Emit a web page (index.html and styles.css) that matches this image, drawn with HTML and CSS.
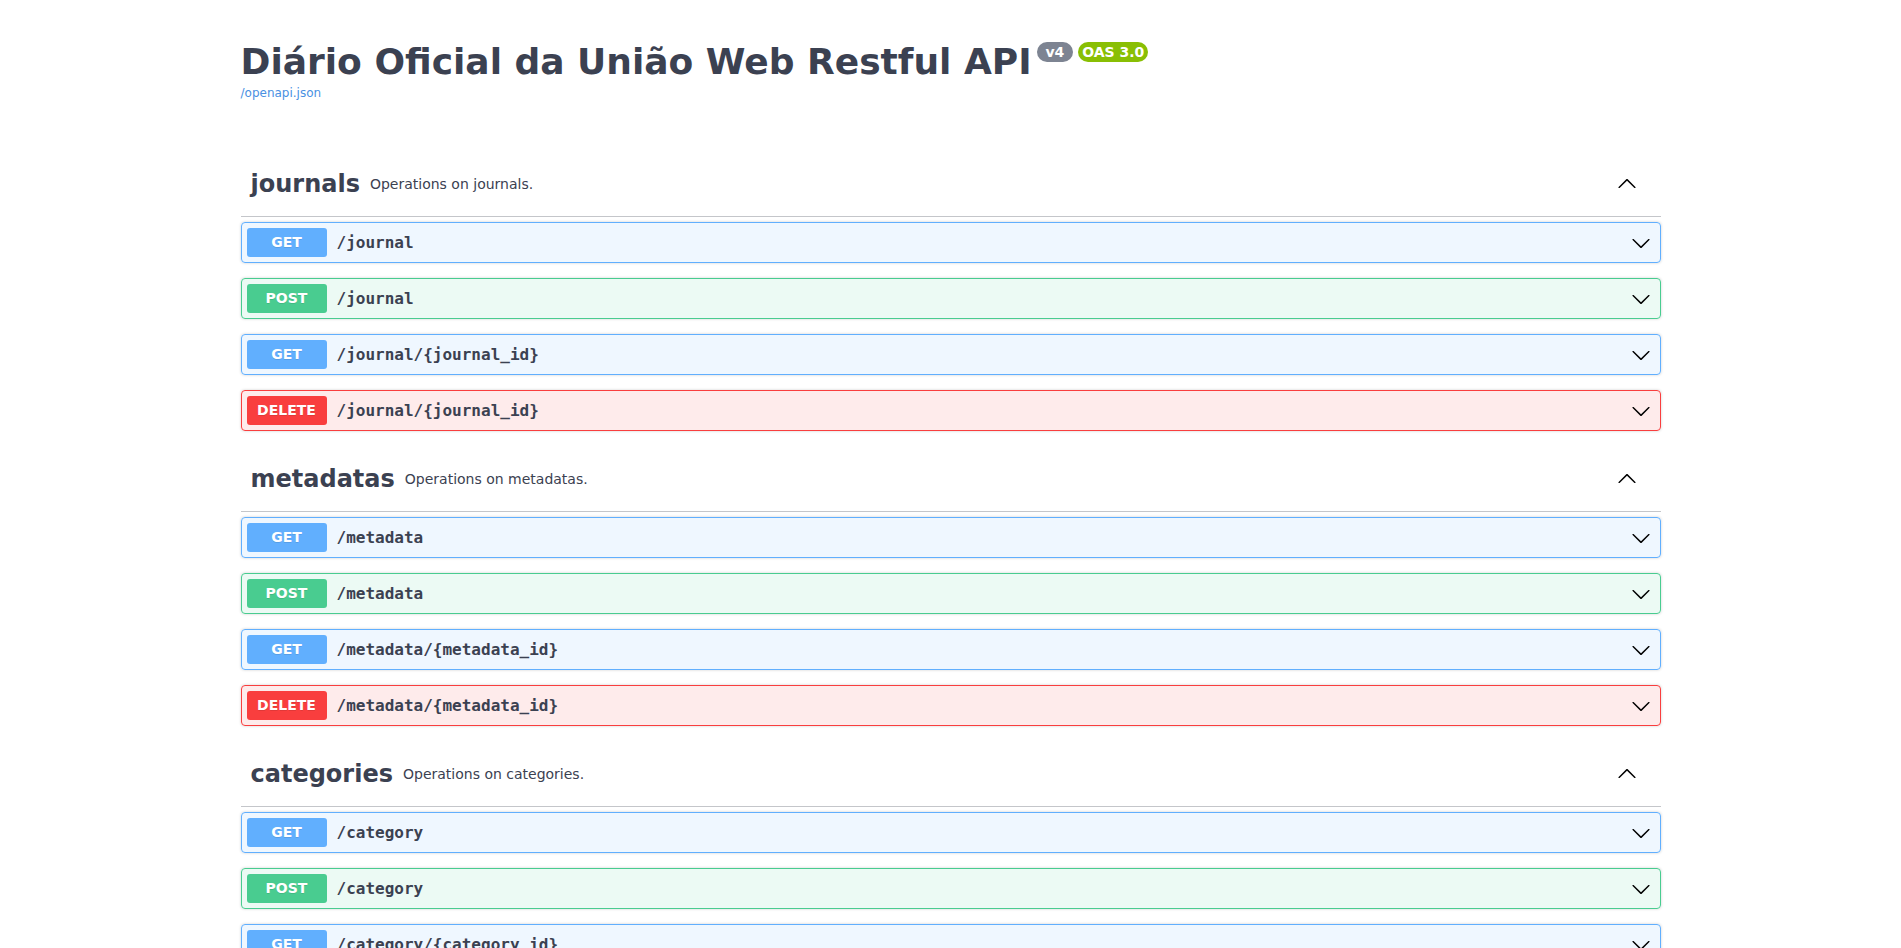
FILE: index.html
```html
<!DOCTYPE html>
<html lang="pt">
<head>
<meta charset="utf-8">
<title>Diário Oficial da União Web Restful API</title>
<link rel="stylesheet" href="styles.css">
</head>
<body>
<svg width="0" height="0" class="defs" aria-hidden="true">
  <defs>
    <symbol id="arrow-down" viewBox="0 0 20 20"><path d="M17.418 6.109c.272-.268.709-.268.979 0s.271.701 0 .969l-7.908 7.83c-.27.268-.707.268-.979 0l-7.908-7.83c-.27-.268-.27-.701 0-.969.271-.268.709-.268.979 0L10 13.25l7.418-7.141z"/></symbol>
    <symbol id="arrow-up" viewBox="0 0 20 20"><path transform="rotate(180 10 10)" d="M17.418 6.109c.272-.268.709-.268.979 0s.271.701 0 .969l-7.908 7.83c-.27.268-.707.268-.979 0l-7.908-7.83c-.27-.268-.27-.701 0-.969.271-.268.709-.268.979 0L10 13.25l7.418-7.141z"/></symbol>
  </defs>
</svg>
<div class="wrapper">
  <div class="info">
    <h2 class="title">Diário Oficial da União Web Restful API<span class="stamp stamp-version"> v4 </span><span class="stamp stamp-oas">OAS 3.0</span></h2>
    <a class="link" href="#">/openapi.json</a>
  </div>

  <div class="tag-section">
    <h3 class="tag"><span class="tag-name">journals</span><span class="tag-desc"><span class="tag-p">Operations on journals.</span></span><svg class="tag-arrow" width="20" height="20"><use href="#arrow-up"/></svg></h3>
    <div class="opblock get"><div class="summary"><span class="method">GET</span><span class="path">/journal</span><svg class="arrow" width="20" height="20"><use href="#arrow-down"/></svg></div></div>
    <div class="opblock post"><div class="summary"><span class="method">POST</span><span class="path">/journal</span><svg class="arrow" width="20" height="20"><use href="#arrow-down"/></svg></div></div>
    <div class="opblock get"><div class="summary"><span class="method">GET</span><span class="path">/journal/{journal_id}</span><svg class="arrow" width="20" height="20"><use href="#arrow-down"/></svg></div></div>
    <div class="opblock delete"><div class="summary"><span class="method">DELETE</span><span class="path">/journal/{journal_id}</span><svg class="arrow" width="20" height="20"><use href="#arrow-down"/></svg></div></div>
  </div>

  <div class="tag-section">
    <h3 class="tag"><span class="tag-name">metadatas</span><span class="tag-desc"><span class="tag-p">Operations on metadatas.</span></span><svg class="tag-arrow" width="20" height="20"><use href="#arrow-up"/></svg></h3>
    <div class="opblock get"><div class="summary"><span class="method">GET</span><span class="path">/metadata</span><svg class="arrow" width="20" height="20"><use href="#arrow-down"/></svg></div></div>
    <div class="opblock post"><div class="summary"><span class="method">POST</span><span class="path">/metadata</span><svg class="arrow" width="20" height="20"><use href="#arrow-down"/></svg></div></div>
    <div class="opblock get"><div class="summary"><span class="method">GET</span><span class="path">/metadata/{metadata_id}</span><svg class="arrow" width="20" height="20"><use href="#arrow-down"/></svg></div></div>
    <div class="opblock delete"><div class="summary"><span class="method">DELETE</span><span class="path">/metadata/{metadata_id}</span><svg class="arrow" width="20" height="20"><use href="#arrow-down"/></svg></div></div>
  </div>

  <div class="tag-section">
    <h3 class="tag"><span class="tag-name">categories</span><span class="tag-desc"><span class="tag-p">Operations on categories.</span></span><svg class="tag-arrow" width="20" height="20"><use href="#arrow-up"/></svg></h3>
    <div class="opblock get"><div class="summary"><span class="method">GET</span><span class="path">/category</span><svg class="arrow" width="20" height="20"><use href="#arrow-down"/></svg></div></div>
    <div class="opblock post"><div class="summary"><span class="method">POST</span><span class="path">/category</span><svg class="arrow" width="20" height="20"><use href="#arrow-down"/></svg></div></div>
    <div class="opblock get"><div class="summary"><span class="method">GET</span><span class="path">/category/{category_id}</span><svg class="arrow" width="20" height="20"><use href="#arrow-down"/></svg></div></div>
    <div class="opblock delete"><div class="summary"><span class="method">DELETE</span><span class="path">/category/{category_id}</span><svg class="arrow" width="20" height="20"><use href="#arrow-down"/></svg></div></div>
  </div>
</div>
</body>
</html>
```
FILE: styles.css
```css
body {
  margin: 8px;
  background: #fff;
  color: #3b4151;
  font-family: "DejaVu Sans", sans-serif;
}

.defs {
  position: absolute;
  width: 0;
  height: 0;
  overflow: hidden;
}

.wrapper {
  box-sizing: border-box;
  max-width: 1460px;
  margin: 0 auto;
  padding: 0 20px;
}

.info {
  padding-top: 33px;
  margin-bottom: 51px;
}

.title {
  margin: 0;
  font-size: 36px;
  font-weight: bold;
  line-height: normal;
  color: #3b4151;
}

.stamp {
  display: inline-block;
  vertical-align: top;
  margin: 1px 0 0 5px;
  padding: 2px 4px;
  border-radius: 57px;
  font-size: 14px;
  font-weight: bold;
  line-height: normal;
  color: #fff;
  white-space: pre;
}

.stamp-version {
  background: #7d8492;
}

.stamp-oas {
  background: #89bf04;
}

.link {
  display: block;
  margin-top: 4px;
  font-size: 12px;
  line-height: normal;
  color: #4990e2;
  text-decoration: none;
}

.tag {
  display: flex;
  align-items: center;
  margin: 0 0 5px;
  padding: 10px 20px 10px 10px;
  border-bottom: 1px solid rgba(59, 65, 81, 0.3);
  font-size: 24px;
  font-weight: normal;
  color: #3b4151;
}

.tag-name {
  font-weight: bold;
}

.tag-desc {
  flex: 1;
  padding: 0 10px;
  font-size: 14px;
}

.tag-p {
  display: block;
  margin: 14.5px 0;
}

.tag-arrow {
  margin-right: 4px;
  fill: #000;
}

.opblock {
  margin: 0 0 15px;
  border: 1px solid #000;
  border-radius: 4px;
  box-shadow: 0 0 3px rgba(0, 0, 0, 0.19);
}

.summary {
  display: flex;
  align-items: center;
  padding: 5px;
}

.method {
  min-width: 80px;
  padding: 6px 0;
  border-radius: 3px;
  font-size: 14px;
  font-weight: bold;
  line-height: 17px;
  text-align: center;
  color: #fff;
  text-shadow: 0 1px 0 rgba(0, 0, 0, 0.1);
}

.path {
  flex: 1;
  padding: 0 10px;
  font-family: "DejaVu Sans Mono", monospace;
  font-size: 16px;
  font-weight: 600;
  color: #3b4151;
}

.arrow {
  margin-right: 4px;
  fill: #000;
}

.get {
  background: rgba(97, 175, 254, 0.1);
  border-color: #61affe;
}

.get .method {
  background: #61affe;
}

.post {
  background: rgba(73, 204, 144, 0.1);
  border-color: #49cc90;
}

.post .method {
  background: #49cc90;
}

.delete {
  background: rgba(249, 62, 62, 0.1);
  border-color: #f93e3e;
}

.delete .method {
  background: #f93e3e;
}
```
